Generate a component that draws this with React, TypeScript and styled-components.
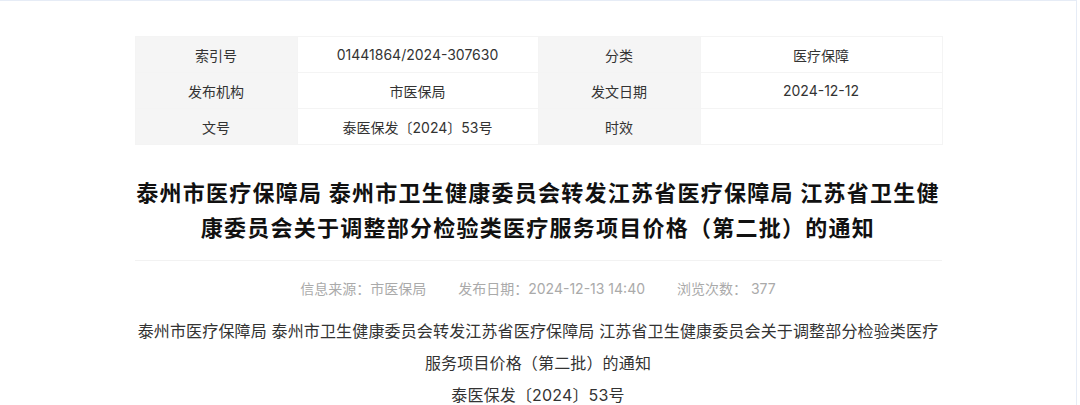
import styled, { createGlobalStyle } from "styled-components";

const GlobalStyle = createGlobalStyle`
  body {
    margin: 0;
    background: #fff;
    font-family: "Inter", "Noto Sans CJK SC", sans-serif;
    color: #333;
  }
`;

const Frame = styled.div`
  width: 1076px;
  height: 404px;
  border-top: 1px solid #e6ecf6;
  border-right: 1px solid #e6ecf6;
  overflow: hidden;
`;

const Article = styled.div`
  width: 807px;
  margin: 0 auto;
  padding-top: 35px;
`;

const InfoTable = styled.table`
  width: 807px;
  border-collapse: collapse;
  table-layout: fixed;
  font-size: 14px;
  color: #333;
`;

const Cell = styled.td<{ $label?: boolean }>`
  height: 35px;
  padding: 0;
  text-align: center;
  border: 1px solid #f4f4f4;
  background: ${(p) => (p.$label ? "#f5f5f5" : "#fff")};
`;

const Title = styled.h1`
  margin: 0;
  padding: 31px 0 14px;
  font-size: 22px;
  letter-spacing: 1.25px;
  line-height: 35px;
  font-weight: 700;
  color: #111;
  text-align: center;
  border-bottom: 1px solid #f2f2f2;
`;

const Meta = styled.div`
  display: flex;
  justify-content: center;
  margin-top: 17px;
  font-size: 14px;
  line-height: 22px;
  color: #aaa;
`;

const MetaItem = styled.span`
  margin: 0 16px;
`;

const Body = styled.div`
  margin-top: 15px;
  font-size: 16px;
  line-height: 32px;
  letter-spacing: 0.15px;
  color: #333;
  text-align: center;
`;

const Para = styled.p`
  margin: 0;
`;

const rows = [
  ["索引号", "01441864/2024-307630", "分类", "医疗保障"],
  ["发布机构", "市医保局", "发文日期", "2024-12-12"],
  ["文号", "泰医保发〔2024〕53号", "时效", ""],
];

function App() {
  return (
    <Frame>
      <GlobalStyle />
      <Article>
        <InfoTable>
          <colgroup>
            <col style={{ width: 162 }} />
            <col style={{ width: 241 }} />
            <col style={{ width: 162 }} />
            <col style={{ width: 242 }} />
          </colgroup>
          <tbody>
            {rows.map((r) => (
              <tr key={r[0]}>
                <Cell $label>{r[0]}</Cell>
                <Cell>{r[1]}</Cell>
                <Cell $label>{r[2]}</Cell>
                <Cell>{r[3]}</Cell>
              </tr>
            ))}
          </tbody>
        </InfoTable>
        <Title>
          泰州市医疗保障局 泰州市卫生健康委员会转发江苏省医疗保障局 江苏省卫生健康委员会关于调整部分检验类医疗服务项目价格（第二批）的通知
        </Title>
        <Meta>
          <MetaItem>信息来源：市医保局</MetaItem>
          <MetaItem>发布日期：2024-12-13 14:40</MetaItem>
          <MetaItem>浏览次数： 377</MetaItem>
        </Meta>
        <Body>
          <Para>
            泰州市医疗保障局 泰州市卫生健康委员会转发江苏省医疗保障局 江苏省卫生健康委员会关于调整部分检验类医疗服务项目价格（第二批）的通知
          </Para>
          <Para>泰医保发〔2024〕53号</Para>
        </Body>
      </Article>
    </Frame>
  );
}

export default App;
